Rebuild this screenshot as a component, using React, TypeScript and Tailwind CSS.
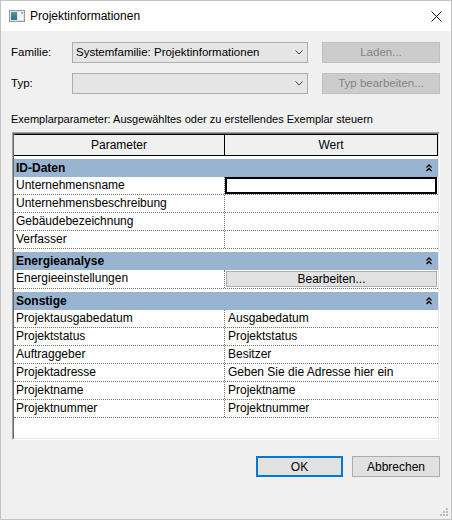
import React from "react";

type Row = { name: string; value?: string; kind?: "edit" | "button" };
type Group = { title: string; rows: Row[] };

const groups: Group[] = [
  {
    title: "ID-Daten",
    rows: [
      { name: "Unternehmensname", kind: "edit" },
      { name: "Unternehmensbeschreibung" },
      { name: "Gebäudebezeichnung" },
      { name: "Verfasser" },
    ],
  },
  {
    title: "Energieanalyse",
    rows: [{ name: "Energieeinstellungen", kind: "button" }],
  },
  {
    title: "Sonstige",
    rows: [
      { name: "Projektausgabedatum", value: "Ausgabedatum" },
      { name: "Projektstatus", value: "Projektstatus" },
      { name: "Auftraggeber", value: "Besitzer" },
      { name: "Projektadresse", value: "Geben Sie die Adresse hier ein" },
      { name: "Projektname", value: "Projektname" },
      { name: "Projektnummer", value: "Projektnummer" },
    ],
  },
];

function AppIcon() {
  return (
    <svg width="16" height="12" viewBox="0 0 16 12">
      <defs>
        <linearGradient id="ai" x1="0" y1="0" x2="0" y2="1">
          <stop offset="0" stopColor="#4f9c8e" />
          <stop offset="1" stopColor="#2f6f8a" />
        </linearGradient>
      </defs>
      <rect x="0.5" y="0.5" width="15" height="11" fill="#e6e6e6" stroke="#9a9a9a" />
      <rect x="2" y="2" width="6" height="8" fill="url(#ai)" />
      <rect x="9" y="2" width="5" height="8" fill="#f7f7f7" />
      <rect x="12" y="2" width="2" height="2" fill="#8fb3d9" />
    </svg>
  );
}

function Chevron() {
  return (
    <svg width="8" height="5" viewBox="0 0 8 5" className="shrink-0">
      <polyline points="0.5,0.5 4,4 7.5,0.5" fill="none" stroke="#404040" strokeWidth="1" />
    </svg>
  );
}

function Collapse() {
  return (
    <svg width="6" height="8" viewBox="0 0 6 8">
      <polyline points="0.5,3.5 3,1 5.5,3.5" fill="none" stroke="#000" strokeWidth="1.3" />
      <polyline points="0.5,7 3,4.5 5.5,7" fill="none" stroke="#000" strokeWidth="1.3" />
    </svg>
  );
}

function Combo({ text }: { text?: string }) {
  return (
    <div className="flex h-[21px] w-[236px] items-center justify-between border border-[#adadad] bg-[#e5e5e5] pl-[3px] pr-[4px] text-[11.5px]">
      <span className="truncate">{text}</span>
      <Chevron />
    </div>
  );
}

function DisabledButton({ label }: { label: string }) {
  return (
    <div className="ml-[14px] flex h-[21px] w-[118px] items-center justify-center border border-[#bfbfbf] bg-[#cccccc] text-[11.5px] text-[#838383]">
      {label}
    </div>
  );
}

export default function App() {
  return (
    <div className="relative flex h-[520px] w-[452px] flex-col border border-[#c3c3c3] bg-[#f0f0f0] font-['Liberation_Sans',Arial,sans-serif] text-[12px] text-black">
      {/* Titelleiste */}
      <div className="flex h-[30px] shrink-0 items-center bg-white pl-[8px] pr-[9px]">
        <AppIcon />
        <span className="ml-[5px] text-[12px]">Projektinformationen</span>
        <svg width="11" height="11" viewBox="0 0 11 11" className="ml-auto">
          <path d="M0.5 0.5 L10.5 10.5 M10.5 0.5 L0.5 10.5" stroke="#111" strokeWidth="1" />
        </svg>
      </div>

      <div className="flex flex-1 flex-col px-[10px] pt-[11px]">
        <div className="flex items-center">
          <span className="w-[61px] text-[11.5px]">Familie:</span>
          <Combo text="Systemfamilie: Projektinformationen" />
          <DisabledButton label="Laden..." />
        </div>
        <div className="mt-[10px] flex items-center">
          <span className="w-[61px] text-[11.5px]">Typ:</span>
          <Combo />
          <DisabledButton label="Typ bearbeiten..." />
        </div>

        <div className="mt-[17px] h-[16px] text-[11px] leading-[16px]">
          Exemplarparameter: Ausgewähltes oder zu erstellendes Exemplar steuern
        </div>

        {/* Eigenschaftentabelle */}
        <div className="ml-[1px] mt-[5px] h-[308px] w-[428px] border border-t-[#a0a0a0] border-l-[#a0a0a0] border-r-white border-b-white">
          <div className="flex h-full flex-col border border-t-[#696969] border-l-[#696969] border-r-[#e3e3e3] border-b-[#e3e3e3] bg-white">
            <div className="flex h-[22px] shrink-0 border-y border-r border-black bg-[#f0f0f0]">
              <div className="flex w-[211px] items-center justify-center border-r border-black">Parameter</div>
              <div className="flex flex-1 items-center justify-center">Wert</div>
            </div>

            {groups.map((g) => (
              <div key={g.title}>
                <div className="mt-[3px] flex h-[18px] items-center justify-between bg-[#99b4d1] pl-[2px] pr-[6px] font-bold">
                  <span>{g.title}</span>
                  <Collapse />
                </div>
                {g.rows.map((r) => (
                  <div
                    key={r.name}
                    className={`flex border-b border-dotted border-[#707070] ${r.kind === "button" ? "h-[19px]" : "h-[18px]"}`}
                  >
                    <div className="w-[210px] truncate pl-[2px] leading-[17px]">{r.name}</div>
                    <div className="flex-1 border-l border-dotted border-[#707070]">
                      {r.kind === "edit" && <div className="h-[17px] w-[212px] border-2 border-black" />}
                      {r.kind === "button" && (
                        <div className="ml-[1px] mt-[1px] flex h-[16px] w-[211px] items-center justify-center border border-[#adadad] bg-[#e1e1e1]">
                          Bearbeiten...
                        </div>
                      )}
                      {r.value && <div className="pl-[3px] leading-[17px]">{r.value}</div>}
                    </div>
                  </div>
                ))}
              </div>
            ))}
          </div>
        </div>

        <div className="mt-[16px] flex justify-end pr-[1px]">
          <div className="flex h-[21px] w-[87px] items-center justify-center border-2 border-[#0078d7] bg-[#e1e1e1]">OK</div>
          <div className="ml-[9px] flex h-[21px] w-[88px] items-center justify-center border border-[#adadad] bg-[#e1e1e1]">
            Abbrechen
          </div>
        </div>
      </div>

      <svg width="8" height="8" viewBox="0 0 8 8" className="absolute bottom-[3px] right-[3px]">
        <rect x="6" y="0" width="2" height="2" fill="#b8b8b8" />
        <rect x="3" y="3" width="2" height="2" fill="#b8b8b8" />
        <rect x="6" y="3" width="2" height="2" fill="#b8b8b8" />
        <rect x="0" y="6" width="2" height="2" fill="#b8b8b8" />
        <rect x="3" y="6" width="2" height="2" fill="#b8b8b8" />
        <rect x="6" y="6" width="2" height="2" fill="#b8b8b8" />
      </svg>
    </div>
  );
}
